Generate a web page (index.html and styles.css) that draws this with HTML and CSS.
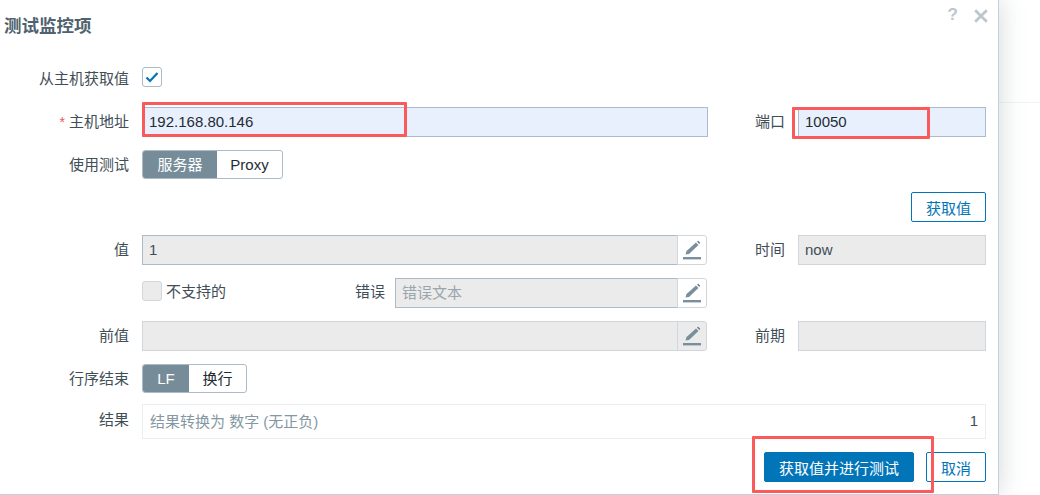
FILE: index.html
```html
<!DOCTYPE html>
<html lang="zh-CN">
<head>
<meta charset="utf-8">
<title>测试监控项</title>
<link rel="stylesheet" href="styles.css">
</head>
<body>
<div class="page">
  <main class="modal">
    <header class="modal-head">
      <h1 class="title">测试监控项</h1>
      <div class="head-tools">
        <span class="help">?</span>
        <svg class="close" width="14" height="14" viewBox="0 0 14 14"><path d="M1.2 1.2 L12.8 12.8 M12.8 1.2 L1.2 12.8" stroke="#bcc6cd" stroke-width="2.8" fill="none"/></svg>
      </div>
    </header>
    <form class="form">
      <div class="label top">从主机获取值</div>
      <div class="span3 row-top">
        <span class="check">
          <svg width="14" height="12" viewBox="0 0 14 12"><path d="M1.5 6.5 L5 10 L12.5 2" stroke="#0275b8" stroke-width="2.2" fill="none"/></svg>
        </span>
      </div>

      <div class="label"><span class="req">*</span> 主机地址</div>
      <div class="field auto">192.168.80.146</div>
      <div class="label">端口</div>
      <div class="field auto">10050</div>

      <div class="label">使用测试</div>
      <div class="span3">
        <div class="seg">
          <span class="seg-item on server">服务器</span><span class="seg-item proxy">Proxy</span>
        </div>
      </div>

      <div class="actions-row">
        <button type="button" class="btn alt get">获取值</button>
      </div>

      <div class="label">值</div>
      <div class="widget">
        <div class="field ro dark grow">1</div>
        <span class="pencil">
          <svg width="20" height="20" viewBox="0 0 20 20"><path d="M3.5 14.5 L4.5 11 L14 2.5 L16.5 5 L7 14 Z" fill="#7a8f9c"/><path d="M15 1.6 L16.2 0.8 L18.2 2.8 L17.4 4.1 Z" fill="#5f7685"/><rect x="1" y="17" width="18" height="2.4" fill="#7a8f9c"/></svg>
        </span>
      </div>
      <div class="label">时间</div>
      <div class="field ro">now</div>

      <div></div>
      <div class="widget err-row">
        <span class="check off"></span>
        <span class="check-text">不支持的</span>
        <span class="err-label">错误</span>
        <div class="field ro dim grow mid">错误文本</div>
        <span class="pencil">
          <svg width="20" height="20" viewBox="0 0 20 20"><path d="M3.5 14.5 L4.5 11 L14 2.5 L16.5 5 L7 14 Z" fill="#7a8f9c"/><path d="M15 1.6 L16.2 0.8 L18.2 2.8 L17.4 4.1 Z" fill="#5f7685"/><rect x="1" y="17" width="18" height="2.4" fill="#7a8f9c"/></svg>
        </span>
      </div>
      <div class="span2"></div>

      <div class="label">前值</div>
      <div class="widget">
        <div class="field ro grow"></div>
        <span class="pencil gray">
          <svg width="20" height="20" viewBox="0 0 20 20"><path d="M3.5 14.5 L4.5 11 L14 2.5 L16.5 5 L7 14 Z" fill="#7a8f9c"/><path d="M15 1.6 L16.2 0.8 L18.2 2.8 L17.4 4.1 Z" fill="#5f7685"/><rect x="1" y="17" width="18" height="2.4" fill="#7a8f9c"/></svg>
        </span>
      </div>
      <div class="label">前期</div>
      <div class="field ro"></div>

      <div class="label">行序结束</div>
      <div class="span3">
        <div class="seg">
          <span class="seg-item on lf">LF</span><span class="seg-item wrap">换行</span>
        </div>
      </div>

      <div class="label result-label">结果</div>
      <div class="result">
        <span class="result-hint">结果转换为 数字 (无正负)</span>
        <span class="result-val">1</span>
      </div>

      <div class="footer">
        <button type="button" class="btn primary">获取值并进行测试</button>
        <button type="button" class="btn alt cancel">取消</button>
      </div>
    </form>
    <span class="mark mark-host"></span>
    <span class="mark mark-port"></span>
    <span class="mark mark-btn"></span>
  </main>
  <aside class="backdrop"><div class="backdrop-top"></div></aside>
</div>
</body>
</html>
```

FILE: styles.css
```css
* { box-sizing: border-box; }
html, body { margin: 0; padding: 0; background: #fff; }
body {
  width: 1040px;
  height: 495px;
  overflow: hidden;
  font-family: "Liberation Sans", "Noto Sans CJK SC", sans-serif;
  font-size: 15px;
  color: #1f2c33;
}
.page { display: flex; height: 495px; }
.modal {
  position: relative;
  z-index: 1;
  width: 999px;
  height: 495px;
  background: #fff;
  border-right: 1px solid #c5d0d8;
  border-bottom: 1px solid #c5d0d8;
  box-shadow: 0 0 24px rgba(90, 110, 125, 0.28);
}
.backdrop { flex: 1; }
.backdrop-top { height: 103px; border-bottom: 1px solid #f1f3f4; }
.modal-head {
  display: flex;
  justify-content: space-between;
  height: 68px;
  padding: 6px 10px 0 4px;
}
.title {
  margin: 0;
  padding-top: 8px;
  font-size: 17.5px;
  line-height: 24px;
  font-weight: 700;
  color: #4f626e;
}
.head-tools { display: flex; align-items: flex-start; gap: 16px; }
.help { font-size: 17px; line-height: 18px; color: #bcc6cd; font-weight: 700; }
.close { margin-top: 3px; }
.form {
  display: grid;
  grid-template-columns: 129px 566px 64px 188px;
  grid-template-rows: 26px 30px 29px 30px 30px 30px 30px 29px 33px 30px;
  column-gap: 13px;
  row-gap: 13px;
}
.label {
  text-align: right;
  line-height: 30px;
  color: #3f4e57;
  white-space: nowrap;
}
.label.top { line-height: 21px; }
.req { color: #e45959; font-size: 14px; }
.span3 { grid-column: span 3; }
.span2 { grid-column: span 2; }
.row-top { display: flex; align-items: flex-start; }
.check {
  display: flex;
  flex: none;
  align-items: center;
  justify-content: center;
  width: 20px;
  height: 20px;
  margin-top: -1px;
  border: 1px solid #acbbc7;
  border-radius: 3px;
  background: #fff;
}
.check.off { margin-top: 3px; background: #ebebeb; border-color: #cfd6dc; }
.field {
  height: 30px;
  line-height: 28px;
  padding: 0 6px;
  border: 1px solid #acbbc7;
  white-space: nowrap;
  overflow: hidden;
}
.field.auto { background: #e8f0fe; color: #1f2c33; }
.field.ro { background: #ebebeb; border-color: #cfd6dc; color: #3f4e57; }
.field.ro.dark { border-color: #acbbc7; border-right-color: #cfd6dc; }
.field.ro.dim { border-color: #acbbc7; color: #9aa5ac; }
.grow { flex: 1; min-width: 0; }
.widget { display: flex; width: 565px; }
.pencil {
  display: flex;
  align-items: center;
  justify-content: center;
  flex: none;
  width: 30px;
  height: 30px;
  margin-left: -1px;
  background: #fff;
  border: 1px solid #cfd6dc;
  border-radius: 0 3px 3px 0;
}
.pencil.gray { background: #ebebeb; }
.err-row { align-items: flex-start; }
.check-text { margin-left: 4px; width: 60px; line-height: 27px; white-space: nowrap; color: #3f4e57; }
.err-label { margin-left: 129px; width: 30px; line-height: 27px; white-space: nowrap; color: #3f4e57; }
.mid { margin-left: 10px; }
.seg {
  display: inline-flex;
  height: 29px;
  border: 1px solid #acbbc7;
  border-radius: 3px;
  overflow: hidden;
  line-height: 27px;
  background: #fff;
}
.seg-item { text-align: center; color: #1f2c33; }
.seg-item.on { background: #768d99; color: #fff; }
.server { width: 74px; }
.proxy { width: 65px; }
.lf { width: 46px; }
.wrap { width: 57px; }
.actions-row { grid-column: 1 / -1; display: flex; justify-content: flex-end; }
.btn {
  height: 30px;
  padding: 0;
  font: inherit;
  border-radius: 2px;
  cursor: pointer;
}
.btn.alt { background: #fff; border: 1px solid #0275b8; color: #0275b8; }
.btn.primary { width: 150px; background: #0275b8; border: 1px solid #0275b8; color: #fff; }
.get { width: 75px; }
.cancel { width: 60px; }
.result-label { margin-top: -1px; }
.result {
  grid-column: span 3;
  display: flex;
  justify-content: space-between;
  align-items: center;
  height: 35px;
  margin-top: -2px;
  padding: 0 7px 2px;
  border: 1px solid #ebeef0;
}
.result-hint { color: #8497a3; }
.result-val { color: #3f4e57; }
.footer {
  grid-column: 1 / -1;
  display: flex;
  justify-content: flex-end;
  gap: 12px;
}
.mark {
  position: absolute;
  border: 3px solid #fb5a5a;
  border-radius: 1px;
  pointer-events: none;
}
.mark-host { left: 142px; top: 102px; width: 265px; height: 35px; }
.mark-port { left: 792px; top: 107px; width: 138px; height: 32px; }
.mark-btn { left: 752px; top: 436px; width: 182px; height: 57px; }
```
